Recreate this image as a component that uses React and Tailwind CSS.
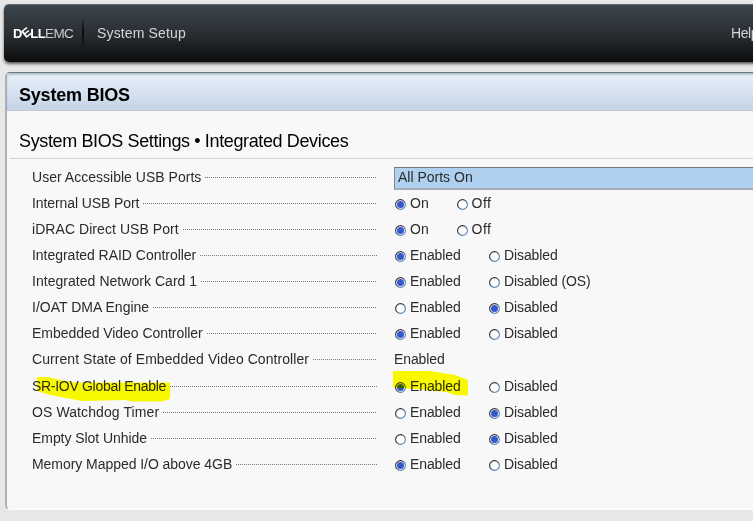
const rows = [
  { label: 'User Accessible USB Ports', select: 'All Ports On', track: 'tracking-[0.02px]' },
  { label: 'Internal USB Port', options: ['On', 'Off'], on: 0, track: 'tracking-[-0.09px]' },
  { label: 'iDRAC Direct USB Port', options: ['On', 'Off'], on: 0, track: 'tracking-[0.06px]' },
  { label: 'Integrated RAID Controller', options: ['Enabled', 'Disabled'], on: 0, track: 'tracking-[-0.03px]' },
  { label: 'Integrated Network Card 1', options: ['Enabled', 'Disabled (OS)'], on: 0, track: 'tracking-[0.04px]' },
  { label: 'I/OAT DMA Engine', options: ['Enabled', 'Disabled'], on: 1, track: 'tracking-[0.01px]' },
  { label: 'Embedded Video Controller', options: ['Enabled', 'Disabled'], on: 0, track: 'tracking-[-0.04px]' },
  { label: 'Current State of Embedded Video Controller', text: 'Enabled', track: 'tracking-[0.06px]' },
  { label: 'SR-IOV Global Enable', options: ['Enabled', 'Disabled'], on: 0, track: 'tracking-[-0.3px]' },
  { label: 'OS Watchdog Timer', options: ['Enabled', 'Disabled'], on: 1, track: 'tracking-[0.1px]' },
  { label: 'Empty Slot Unhide', options: ['Enabled', 'Disabled'], on: 1, track: 'tracking-[-0.06px]' },
  { label: 'Memory Mapped I/O above 4GB', options: ['Enabled', 'Disabled'], on: 0, track: 'tracking-[-0.05px]' },
];

function Radio({ checked }) {
  return (
    <svg width="11" height="11" viewBox="0 0 11 11" className="mt-[2px] mr-[4px] shrink-0">
      <defs>
        <linearGradient id="ring" x1="0" y1="0" x2="1" y2="1">
          <stop offset="0.3" stopColor="#303030" />
          <stop offset="0.75" stopColor="#5c86b8" />
        </linearGradient>
      </defs>
      <circle cx="5.5" cy="5.5" r="4.9" fill="#fff" stroke="url(#ring)" strokeWidth="1.1" />
      {checked && <circle cx="5.5" cy="5.5" r="3.5" fill="#3558cc" />}
    </svg>
  );
}

function Value({ row }) {
  if (row.select) {
    return (
      <div className="mt-[2px] flex h-[23px] flex-1 items-center border border-b-2 border-t-[#777] border-b-[#a3abb5] border-l-[#888] bg-[#afd0ef] pl-[3px]">
        {row.select}
      </div>
    );
  }
  if (row.text) return <div className="tracking-[-0.1px]">{row.text}</div>;
  const short = row.options[0] === 'On';
  return (
    <div className={short ? 'flex pl-px' : 'flex pl-px tracking-[-0.1px]'}>
      <div className={short ? 'flex w-[61.5px] items-center' : 'flex w-[94px] items-center'}>
        <Radio checked={row.on === 0} />
        {row.options[0]}
      </div>
      <div className={short ? 'flex items-center tracking-[0.5px]' : 'flex items-center'}>
        <Radio checked={row.on === 1} />
        {row.options[1]}
      </div>
    </div>
  );
}

export default function App() {
  return (
    <div className="relative h-[521px] w-[753px] overflow-hidden bg-[#e7e7e7] pt-1 font-['Liberation_Sans',Arial,sans-serif] text-[14px] text-[#2b2b2b]">
      <header className="ml-1 flex h-[58px] w-[780px] items-center rounded-[5px] border-t border-[#646c72] bg-linear-to-b from-[#3d454d] via-[#272c30] via-55% to-[#0c0d0d] pl-[9px] shadow-[0_2px_3px_rgba(0,0,0,0.6)]">
        <div className="flex w-[69px] items-center leading-none">
          <span className="flex w-[32px] items-center text-[13px] font-bold tracking-[-0.6px] text-white">
            <span className="w-[8.5px]">D</span>
            <span className="w-[9px] -rotate-[38deg] text-center text-[12.5px]">E</span>
            <span>LL</span>
          </span>
          <span className="text-[13.5px] tracking-[-0.6px] text-[#c9cccd]">EMC</span>
        </div>
        <div className="h-[34px] w-[2px] bg-linear-to-b from-transparent via-[#07090a] to-transparent" />
        <span className="ml-[13px] w-[634px] tracking-[0.15px] text-[#d2d5d6]">System Setup</span>
        <span className="tracking-[-0.4px] text-[#d2d5d6]">Help</span>
      </header>
      <main className="mt-[10px] ml-[5px] h-[438px] w-[780px] overflow-hidden rounded-[5px] border-t border-b border-l-2 border-t-[#65767d] border-b-white border-l-[#a9b0bb] bg-[#f8f8f8]">
        <div className="flex h-[38px] items-center border-b border-[#c3c9d0] bg-linear-to-b from-[#e9f1fa] to-[#c4d4e6] pt-[8px] pl-[12px] text-[18px] font-bold tracking-[-0.2px] text-black shadow-[inset_0_2px_2px_#b5c3cd]">
          System BIOS
        </div>
        <h2 className="ml-[3px] flex h-[48px] items-center border-b border-[#d2d2d2] pt-[13px] pl-[9px] text-[18px] tracking-[-0.37px] text-black">
          System BIOS Settings • Integrated Devices
        </h2>
        <div className="mt-[5px] pl-[25px]">
          {rows.map((row) => (
            <div key={row.label} className="flex h-[26px] items-center [&:nth-child(9)]:mt-px">
              <div className="mr-[17px] flex w-[345px] items-center">
                <span className={`${row.track} whitespace-nowrap`}>{row.label}</span>
                <span className="ml-[4px] h-px flex-1 bg-[repeating-linear-gradient(90deg,#777_0_1px,transparent_1px_2px)]" />
              </div>
              <Value row={row} />
            </div>
          ))}
        </div>
      </main>
      <svg width="753" height="521" className="pointer-events-none absolute top-0 left-0 mix-blend-multiply" fill="#ffff00">
        <path d="M37 377H48L58 379.5L75 382.5H170V399L162 401.5H133L125 400L82 401L66 398L50 395L37 391Z" />
        <path d="M393 371H430L455 375L468 380V395.5L455 395L446 392L420 389.5L393 387.5Z" />
      </svg>
    </div>
  );
}
